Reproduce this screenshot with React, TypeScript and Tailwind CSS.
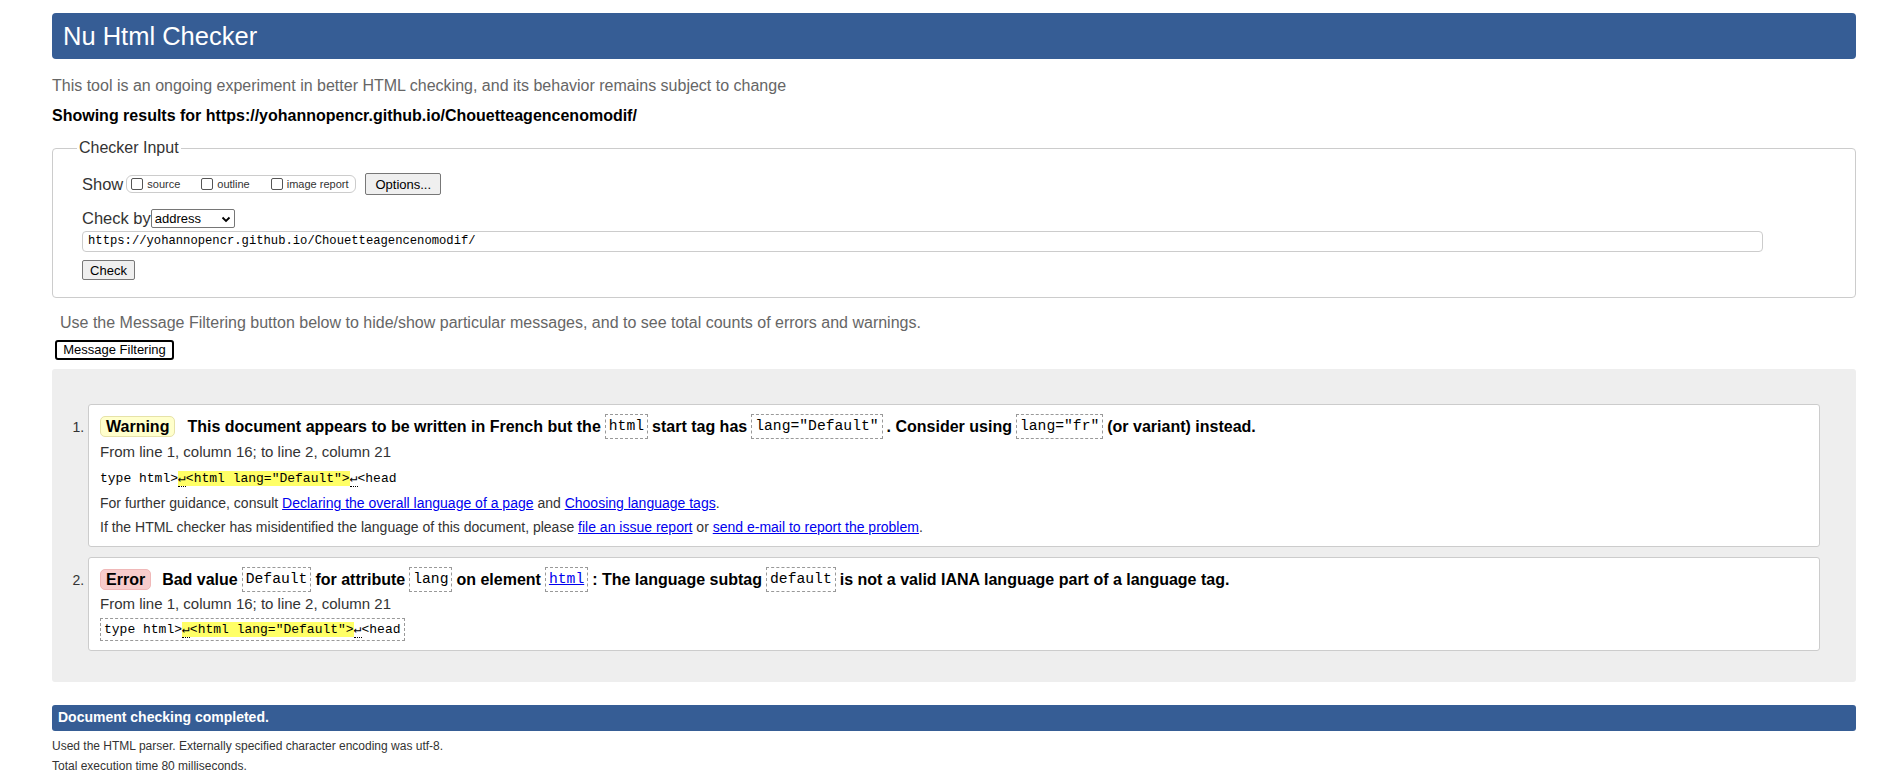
import React from 'react';

//=========================================================================================================
//? Small pieces
//=========================================================================================================

const mono = "font-['Consolas','Liberation_Mono',monospace]";

const Code: React.FC<{ children: React.ReactNode; link?: boolean }> = ({ children, link }) => (
  <code
    className={`${mono} mx-[4px] inline-block border border-dashed border-[#999] px-[3px] text-[14.7px] font-normal leading-[23px] ${
      link ? 'text-[#0000ee] underline' : 'text-black'
    }`}
  >
    {children}
  </code>
);

// source extract with the highlighted part
const Extract: React.FC<{ boxed?: boolean }> = ({ boxed }) => (
  <div
    className={`${mono} inline-block text-[13px] text-black ${
      boxed ? 'border border-dashed border-[#999] px-[3px] leading-[21px]' : 'leading-[20px]'
    }`}
  >
    type html&gt;
    <span className="bg-[#ffff66]">
      <span className="border-b border-dotted border-black">↵</span>
      &lt;html lang="Default"&gt;
    </span>
    <span className="border-b border-dotted border-black">↵</span>&lt;head
  </div>
);

const A: React.FC<{ children: React.ReactNode }> = ({ children }) => (
  <a className="text-[#0000ee] underline" href="#">
    {children}
  </a>
);

const Box: React.FC<{ label: string; gap: string }> = ({ label, gap }) => (
  <label className={`flex items-center ${gap}`}>
    <span className="inline-block h-[12px] w-[12px] rounded-[2px] border border-[#555] bg-white" />
    <span className="ml-[4px]">{label}</span>
  </label>
);

//=========================================================================================================
//? Page
//=========================================================================================================

export default function App() {
  return (
    <div className="min-h-[779px] bg-white pl-[52px] pr-[30px] pt-[13px] font-['Liberation_Sans',Arial,sans-serif] text-black">
      {/* Title bar */}
      <h1 className="flex h-[46px] items-center rounded-[4px] bg-[#365d95] pl-[11px] text-[25.5px] text-white">
        Nu Html Checker
      </h1>

      <p className="mt-[17px] text-[16px] leading-[20px] text-[#666]">
        This tool is an ongoing experiment in better HTML checking, and its behavior remains subject to change
      </p>
      <p className="mt-[10px] text-[16px] font-bold leading-[20px]">
        Showing results for https://yohannopencr.github.io/Chouetteagencenomodif/
      </p>

      {/* Checker input */}
      <fieldset className="mt-[10px] rounded-[4px] border border-[#ccc] px-[29px] pb-[17px]">
        <legend className="-ml-[5px] px-[2px] text-[16px] text-[#333]">Checker Input</legend>

        <div className="mt-[12px] flex items-center text-[16.5px] text-[#333]">
          <span>Show</span>
          <div className="ml-[3px] flex h-[18px] w-[230px] items-center rounded-[6px] border border-[#ccc] px-[4px] text-[11px]">
            <Box label="source" gap="" />
            <Box label="outline" gap="ml-[21px]" />
            <Box label="image report" gap="ml-[21px]" />
          </div>
          <button className="ml-[9px] h-[22px] w-[76px] rounded-[2px] border border-[#777] bg-[#efefef] text-[13px] text-black">
            Options...
          </button>
        </div>

        <div className="mt-[13px] flex h-[18px] items-center text-[16.5px] text-[#333]">
          <span>Check by</span>
          <div className="ml-0 flex h-[19px] w-[84px] items-center justify-between rounded-[2px] border border-[#767676] px-[3px] text-[13px] text-black">
            <span>address</span>
            <svg width="10" height="10" viewBox="0 0 10 10">
              <path d="M1.5 3.5 L5 7 L8.5 3.5" fill="none" stroke="black" strokeWidth="1.8" />
            </svg>
          </div>
        </div>

        <div
          className={`${mono} mt-[3px] flex h-[21px] w-[1681px] items-center rounded-[4px] border border-[#ccc] px-[5px] text-[12.2px] text-black`}
        >
          https://yohannopencr.github.io/Chouetteagencenomodif/
        </div>

        <button className="mt-[8px] block h-[20px] w-[53px] rounded-[2px] border border-[#777] bg-[#efefef] text-[13px] text-black">
          Check
        </button>
      </fieldset>

      {/* Filtering */}
      <p className="ml-[8px] mt-[15px] text-[16px] leading-[20px] text-[#666]">
        Use the Message Filtering button below to hide/show particular messages, and to see total counts of errors and warnings.
      </p>
      <button className="ml-[3px] mt-[7px] flex h-[20px] w-[119px] items-center justify-center rounded-[3px] border-2 border-black bg-white text-[13px]">
        Message Filtering
      </button>

      {/* Results */}
      <div className="mt-[9px] h-[313px] rounded-[3px] bg-[#eeeeee] pl-[36px] pr-[36px] pt-[35px]">
        <ol className="flex list-decimal flex-col gap-[10px] pl-0 text-[14px]">
          <li className="h-[143px] rounded-[3px] border border-[#ccc] bg-white pl-[11px] pt-[9px] marker:text-[#333]">
            <div className="flex flex-wrap items-center text-[16px] font-bold leading-[25px]">
              <span className="mr-[12px] rounded-[5px] border border-[#e6e2a8] bg-[#ffffcc] px-[5px] leading-[19px]">
                Warning
              </span>
              <span>This document appears to be written in French but the</span>
              <Code>html</Code>
              <span>start tag has</span>
              <Code>lang="Default"</Code>
              <span>. Consider using</span>
              <Code>lang="fr"</Code>
              <span>(or variant) instead.</span>
            </div>
            <p className="mt-[3px] text-[15px] leading-[20px] text-[#333]">From line 1, column 16; to line 2, column 21</p>
            <div className="mt-[5px]">
              <Extract />
            </div>
            <p className="mt-[4px] text-[14px] leading-[20px] text-[#333]">
              For further guidance, consult <A>Declaring the overall language of a page</A> and{' '}
              <A>Choosing language tags</A>.
            </p>
            <p className="mt-[4px] text-[14px] leading-[20px] text-[#333]">
              If the HTML checker has misidentified the language of this document, please <A>file an issue report</A> or{' '}
              <A>send e-mail to report the problem</A>.
            </p>
          </li>

          <li className="h-[94px] rounded-[3px] border border-[#ccc] bg-white pl-[11px] pt-[9px] marker:text-[#333]">
            <div className="flex flex-wrap items-center text-[16px] font-bold leading-[25px]">
              <span className="mr-[11px] rounded-[5px] border border-[#f0b8b8] bg-[#f8cccc] px-[5px] leading-[19px]">
                Error
              </span>
              <span>Bad value</span>
              <Code>Default</Code>
              <span>for attribute</span>
              <Code>lang</Code>
              <span>on element</span>
              <Code link>html</Code>
              <span>: The language subtag</span>
              <Code>default</Code>
              <span>is not a valid IANA language part of a language tag.</span>
            </div>
            <p className="mt-[2px] text-[15px] leading-[20px] text-[#333]">From line 1, column 16; to line 2, column 21</p>
            <div className="mt-[4px]">
              <Extract boxed />
            </div>
          </li>
        </ol>
      </div>

      {/* Footer */}
      <div className="mt-[23px] flex h-[26px] items-center rounded-[3px] bg-[#365d95] pl-[6px] text-[14px] font-bold text-white">
        Document checking completed.
      </div>
      <p className="mt-[8px] text-[12px] leading-[14px] text-[#333]">
        Used the HTML parser. Externally specified character encoding was utf-8.
      </p>
      <p className="mt-[6px] text-[12px] leading-[14px] text-[#333]">Total execution time 80 milliseconds.</p>
    </div>
  );
}
